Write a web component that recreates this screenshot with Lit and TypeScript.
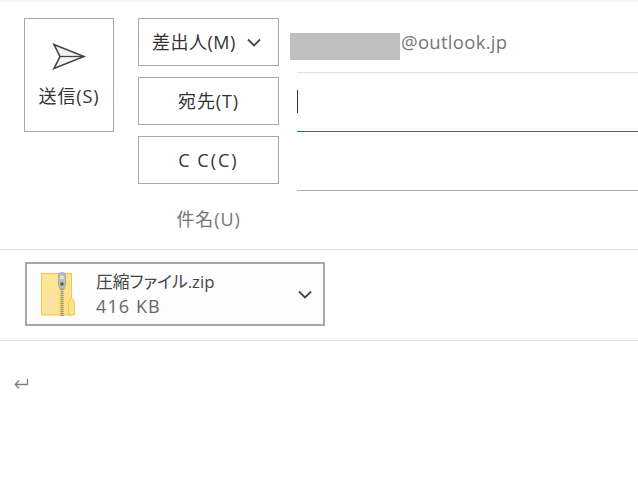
import { LitElement, html, css } from "lit";
import { customElement } from "lit/decorators.js";

@customElement("app-root")
export class AppRoot extends LitElement {
  static styles = css`
    :host {
      display: block;
      width: 638px;
      height: 489px;
      overflow: hidden;
      background: #fff;
      font-family: "Open Sans", "Noto Sans CJK JP", sans-serif;
      font-size: 18px;
      letter-spacing: 0.9px;
      color: #333;
    }
    .strip { height: 2px; background: #f4f4f4; }
    .head {
      display: flex;
      height: 248px;
      padding: 16px 0 0 24px;
      box-sizing: border-box;
      border-bottom: 1px solid #e1e1e1;
    }
    .send {
      box-sizing: border-box;
      width: 90px;
      height: 114px;
      border: 1px solid #a9a9a9;
      display: flex;
      flex-direction: column;
      align-items: center;
      padding-top: 23px;
    }
    .send svg { display: block; margin-bottom: 13px; }
    .send span { line-height: 22px; }
    .labels {
      display: flex;
      flex-direction: column;
      gap: 11px;
      width: 141px;
      margin-left: 24px;
    }
    .btn {
      box-sizing: border-box;
      height: 48px;
      border: 1px solid #a9a9a9;
      display: flex;
      align-items: center;
      justify-content: center;
      line-height: 22px;
    }
    .btn.menu { justify-content: flex-start; padding-left: 13px; gap: 11px; letter-spacing: 0.5px; }
    .cc { letter-spacing: 2px; word-spacing: -1px; }
    .subject {
      display: flex;
      justify-content: center;
      color: #767676;
      line-height: 22px;
      margin-top: 13px;
    }
    .fields { flex: 1; margin-left: 18px; }
    .row { box-sizing: border-box; height: 59px; border-bottom: 1px solid #adadad; }
    .from { height: 55px; border-bottom-color: #e1e1e1; display: flex; align-items: flex-start; padding-top: 15px; }
    .redact { width: 110px; height: 27px; margin-left: -7px; background: #bfbfbf; flex: none; }
    .mail { color: #767676; line-height: 22px; margin: -2px 0 0 1px; font-size: 18.5px; letter-spacing: 0.3px; }
    .to { border-bottom-color: #106ebe; padding-top: 17px; }
    .caret { width: 1px; height: 23px; background: #333; }
    .attach-row {
      box-sizing: border-box;
      height: 91px;
      padding: 12px 0 0 25px;
      border-bottom: 1px solid #e1e1e1;
    }
    .card {
      box-sizing: border-box;
      width: 300px;
      height: 64px;
      border: 2px solid #a8a8a8;
      background: #fdfdfd;
      display: flex;
      align-items: center;
      padding: 0 11px 0 14px;
    }
    .card .zip { flex: none; display: block; }
    .info { flex: 1; margin-left: 19px; line-height: 24px; }
    .name { color: #444; font-size: 16.8px; letter-spacing: 0; font-feature-settings: "palt"; }
    .size { color: #666; font-size: 18px; letter-spacing: 1.1px; }
    .body { padding: 36px 0 0 14px; }
    .ret { display: block; }
  `;

  render() {
    return html`
      <div class="strip"></div>
      <div class="head">
        <div class="send">
          <svg width="34" height="30" viewBox="0 0 34 30" fill="none">
            <path d="M2 2.5 L32 14.5 L2 26.5 L8 14.5 Z" fill="#f3f3f3" stroke="#444" stroke-width="1.6"></path>
            <path d="M8 14.5 H32" stroke="#444" stroke-width="1.3"></path>
          </svg>
          <span>送信(S)</span>
        </div>
        <div class="labels">
          <div class="btn menu">
            <span>差出人(M)</span>
            <svg width="14" height="9" viewBox="0 0 14 9" fill="none">
              <path d="M1 1.5 L7 7.5 L13 1.5" stroke="#444" stroke-width="1.8"></path>
            </svg>
          </div>
          <div class="btn"><span>宛先(T)</span></div>
          <div class="btn"><span class="cc">C C(C)</span></div>
          <div class="subject">件名(U)</div>
        </div>
        <div class="fields">
          <div class="row from">
            <div class="redact"></div>
            <span class="mail">@outlook.jp</span>
          </div>
          <div class="row to"><div class="caret"></div></div>
          <div class="row"></div>
        </div>
      </div>
      <div class="attach-row">
        <div class="card">
          <svg class="zip" width="36" height="44" viewBox="0 0 36 44" fill="none">
            <rect x="0.5" y="1.5" width="30" height="41.5" fill="#fde08a" stroke="#eec94f"></rect>
            <rect x="1.5" y="2.5" width="15" height="39.5" fill="#fde596"></rect>
            <path d="M27.5 43 V30 L30.5 25.5 L33.5 30 V43 Z" fill="#fde08a" stroke="#eec94f"></path>
            <path d="M21 15 V44" stroke="#a8a8a8" stroke-width="4" stroke-dasharray="1 1"></path>
            <path d="M21 15 V44" stroke="#b8926c" stroke-width="1"></path>
            <path d="M17.5 3 Q17.5 0.5 21 0.5 Q24.5 0.5 24.5 3 V13 L23 17 H19 L17.5 13 Z" fill="#bdbdbd" stroke="#9b9b9b" stroke-width="0.7"></path>
            <rect x="19.5" y="4" width="3" height="3" fill="#ececec"></rect>
            <rect x="19.5" y="10.5" width="3" height="3" fill="#555"></rect>
          </svg>
          <div class="info">
            <div class="name">圧縮ファイル.zip</div>
            <div class="size">416 KB</div>
          </div>
          <svg width="14" height="9" viewBox="0 0 14 9" fill="none">
            <path d="M1 1.5 L7 7.5 L13 1.5" stroke="#444" stroke-width="1.8"></path>
          </svg>
        </div>
      </div>
      <div class="body">
        <svg class="ret" width="15" height="15" viewBox="0 0 15 15" fill="none">
          <path d="M13.5 2 V7.5 H1.5 M5.2 3.5 L1.2 7.5 L5.2 11.5" stroke="#808080" stroke-width="1.3"></path>
        </svg>
      </div>
    `;
  }
}
